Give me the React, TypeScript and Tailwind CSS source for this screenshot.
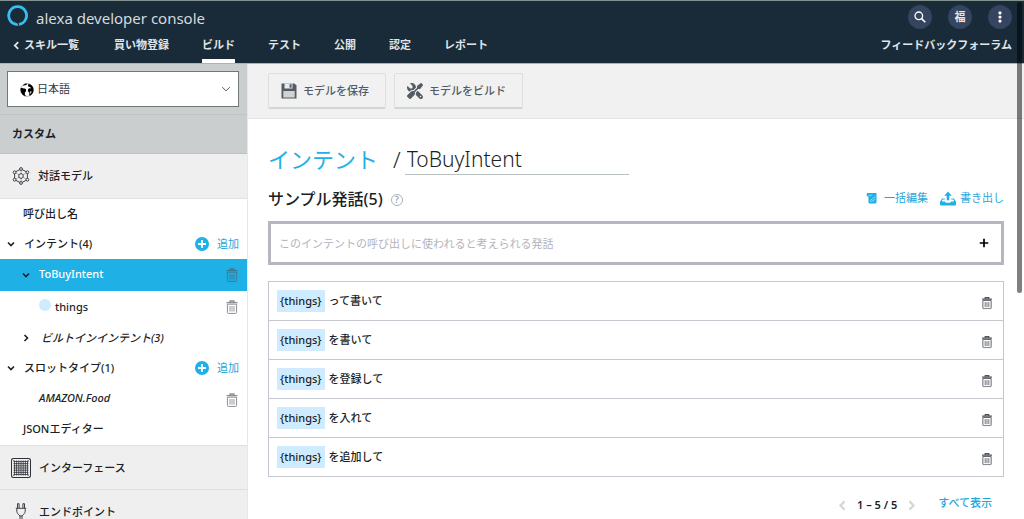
import type { ReactNode, SVGProps } from "react";
import { FaScrewdriverWrench } from "react-icons/fa6";

const navItems = ["買い物登録", "ビルド", "テスト", "公開", "認定", "レポート"];
const utterances = ["って書いて", "を書いて", "を登録して", "を入れて", "を追加して"];

function Trash(props: SVGProps<SVGSVGElement>) {
  return (
    <svg viewBox="0 0 12 14" width="12" height="14" fill="none" stroke="currentColor" aria-hidden="true" {...props}>
      <path d="M0.5 2.7h11M4 2.5V1h4v1.5" strokeWidth="1.3" />
      <path d="M1.4 4.2h9.2v8.3a.9.9 0 0 1-.9.9H2.3a.9.9 0 0 1-.9-.9z" strokeWidth="1" />
      <path d="M4 6v5.6M6 6v5.6M8 6v5.6" strokeWidth="0.9" />
    </svg>
  );
}

function Chevron({ dir, size = 8, width = 1.6 }: { dir: "down" | "right" | "left"; size?: number; width?: number }) {
  const d = { down: "M1 2.5l3 3 3-3", right: "M2.5 1l3 3-3 3", left: "M5.5 1l-3 3 3 3" }[dir];
  return (
    <svg viewBox="0 0 8 8" width={size} height={size} fill="none" stroke="currentColor" strokeWidth={width} className="shrink-0" aria-hidden="true">
      <path d={d} />
    </svg>
  );
}

function Globe() {
  return (
    <svg viewBox="0 0 14 14" width="14" height="14" aria-hidden="true" className="pointer-events-none absolute top-3 left-[13px]">
      <circle cx="7" cy="7" r="6.4" fill="#fff" stroke="#777" strokeWidth="0.5" />
      <path d="M.5 5.600L1.900 4.800l1.800.6 1.500.2 1 1.500-.4 1.400-1 1.200.1 1.700 1 1.800C3.200 13.200.3 10.400.5 5.600z" fill="#000" />
      <path d="M3.200 1.900C4.500.9 6 .5 7.500.6L6.300 1.900l-1.600.4-1 .6z" fill="#000" />
      <path d="M8.600.8c2.500.5 4.500 2.500 4.900 5.200.4 3.200-1.300 5.800-3.800 6.900l-.5-1.400.2-1.700-1.300-1.300-.3-1.800 1.200-1.400 1.700.1-.2-1.200-1.700-.4-.9-1z" fill="#000" />
      <path d="M10.300 8.200l1.300.3-.6 1.800-.9.500z" fill="#fff" />
    </svg>
  );
}

function NetworkIcon() {
  return (
    <svg viewBox="0 0 18 18" width="18" height="18" fill="none" stroke="#3c4148" strokeWidth="1" aria-hidden="true">
      <path d="M9 2l6.400 3.300v7.400L9 16l-6.400-3.300V5.300z" />
      <path d="M9 2v14M3 5.500l12 7M15 5.500l-12 7" strokeWidth="0.400" />
      <g fill="#efefef">
        <circle cx="9" cy="9" r="2.300" />
        <circle cx="9" cy="2" r="1.400" />
        <circle cx="9" cy="16" r="1.400" />
        <circle cx="2.600" cy="5.300" r="1.400" />
        <circle cx="15.400" cy="5.300" r="1.400" />
        <circle cx="2.600" cy="12.700" r="1.400" />
        <circle cx="15.400" cy="12.700" r="1.400" />
      </g>
    </svg>
  );
}

function GridIcon() {
  return (
    <svg viewBox="0 0 20 20" width="20" height="20" fill="none" stroke="#2f3338" aria-hidden="true">
      <rect x="0.500" y="0.500" width="19" height="19" rx="1" />
      <path d="M3.500 2.500v15M5.600 2.500v15M7.800 2.500v15M10 2.500v15M12.200 2.500v15M14.400 2.500v15M16.500 2.500v15M2.500 3.500h15M2.500 5.600h15M2.500 7.800h15M2.500 10h15M2.500 12.200h15M2.500 14.400h15M2.500 16.500h15" strokeWidth="0.800" />
      <path d="M1 1l2 2M19 1l-2 2M1 19l2-2M19 19l-2-2" strokeWidth="0.600" />
    </svg>
  );
}

function PlugIcon() {
  return (
    <svg viewBox="0 0 12 18" width="12" height="18" fill="none" stroke="#3c4148" strokeWidth="1" aria-hidden="true">
      <path d="M2.500 5V.7h1.600V5M7.900 5V.7h1.600V5M.8 5.300h10.400M1.800 5.500v2.700c0 2 1.600 3 3.200 4.800h2c1.600-1.800 3.200-2.800 3.200-4.800V5.500M5 12.800V18M7 12.800V18" />
    </svg>
  );
}

function SaveIcon() {
  return (
    <svg viewBox="0 0 16 16" width="16" height="16" aria-hidden="true">
      <path d="M.5.5h13l2 2v13H.5z" fill="#545b64" />
      <path d="M3.500.5h8v5h-8z" fill="#e9ebeb" />
      <path d="M8.600 1.200h2v3.500h-2z" fill="#545b64" />
      <path d="M2.300 8h11.400v6.500H2.300z" fill="#d0d3d4" />
    </svg>
  );
}

function BulkIcon() {
  return (
    <svg viewBox="0 0 12 12" width="12" height="12" aria-hidden="true">
      <path d="M1.800 1h8.700v9.300c0 .7-.5 1.200-1.200 1.200H3.700c-.7 0-1.200-.5-1.200-1.200V4.500h-.7C1 4.500.7 4 .7 3.300V2.200C.7 1.500 1.100 1 1.800 1z" fill="#1fb0e6" />
      <path d="M2.500 3.300h3.800M4.400 9.300l.6-1.500 4.300-3M5.300 9.700l4-2.500" stroke="#fff" strokeWidth="0.500" fill="none" />
    </svg>
  );
}

function ExportIcon() {
  return (
    <svg viewBox="0 0 16 15" width="16" height="15" fill="#1fb0e6" aria-hidden="true">
      <path d="M8 .5l3.700 4.200H9.300v4.600H6.700V4.700H4.300z" />
      <path d="M4.800 7.500v1H2.600l-.8 2h3.100l.9 1.300h4.400l.9-1.300h3.100l-.8-2h-2.200v-1h2.800l2 3.200v2.500c0 .7-.5 1.300-1.200 1.300H1.200c-.7 0-1.200-.6-1.200-1.300v-2.500l2-3.200z" />
    </svg>
  );
}

function AddLink() {
  return (
    <button type="button" className="ml-auto flex items-center gap-2 font-normal text-[#1fa7dd]">
      <svg viewBox="0 0 14 14" width="14" height="14" aria-hidden="true">
        <circle cx="7" cy="7" r="7" fill="#1fb0e6" />
        <path d="M7 3v8M3 7h8" stroke="#fff" strokeWidth="1.800" />
      </svg>
      追加
    </button>
  );
}

function DeleteButton({ label, className = "" }: { label: string; className?: string }) {
  return (
    <button type="button" aria-label={`${label} を削除`} className={`ml-auto ${className}`}>
      <Trash />
    </button>
  );
}

function RoundButton({ label, children }: { label: string; children: ReactNode }) {
  return (
    <button type="button" aria-label={label} className="flex size-6 items-center justify-center rounded-full bg-[#35445f] text-[11px] font-bold text-[#e6eaec]">
      {children}
    </button>
  );
}

function Header() {
  return (
    <header className="shrink-0 border-t border-b border-t-[#84928f] border-b-[#a9b5b9] bg-[#192b38] text-white">
      <div className="flex h-8 items-center justify-between pr-3 pl-[7px]">
        <div className="flex items-center gap-2">
          <svg viewBox="0 0 21 21" width="21" height="21" aria-hidden="true" className="mb-1">
            <path d="M8.700 19.200a8.900 8.900 0 1 1 3.300.1" fill="none" stroke="#37bdf0" strokeWidth="2.800" />
            <path d="M8.300 17.800l2 .4 1.300 2.500c-1.500.1-2.600 0-3.600-.3z" fill="#37bdf0" />
          </svg>
          <span className="pt-[2px] text-[15px] leading-5 text-[#d5dade]">alexa developer console</span>
        </div>
        <div className="flex items-center gap-4">
          <RoundButton label="検索">
            <svg viewBox="0 0 12 12" width="12" height="12" fill="none" stroke="#fff" aria-hidden="true">
              <circle cx="4.800" cy="4.800" r="3.800" strokeWidth="1.300" />
              <path d="M7.600 7.600l3.700 3.700" strokeWidth="1.600" />
            </svg>
          </RoundButton>
          <RoundButton label="アカウント">福</RoundButton>
          <RoundButton label="メニュー">
            <svg viewBox="0 0 4 12" width="4" height="12" fill="#fff" aria-hidden="true">
              <circle cx="2" cy="1.900" r="1.600" />
              <circle cx="2" cy="6" r="1.600" />
              <circle cx="2" cy="10.100" r="1.600" />
            </svg>
          </RoundButton>
        </div>
      </div>
      <nav className="flex h-[30px] items-stretch gap-[33px] px-3 font-bold text-[#e0e5e8]">
        <a href="#skills" className="flex items-center gap-[3px] pr-[2px] pb-[6px]">
          <Chevron dir="left" size={9} />
          スキル一覧
        </a>
        {navItems.map((item) => (
          <a key={item} href={`#${item}`} className={`flex items-center border-b-4 pb-[2px] ${item === "ビルド" ? "border-white" : "border-transparent"}`}>
            {item}
          </a>
        ))}
        <a href="#forum" className="ml-auto flex items-center pb-[6px]">フィードバックフォーラム</a>
      </nav>
    </header>
  );
}

function Sidebar() {
  return (
    <aside className="flex w-[248px] shrink-0 flex-col border-r border-[#e6e8e8] font-medium">
      <div className="border-b border-[#bfc4c4] bg-[#cacece] px-[7px] py-[7px]">
        <div className="relative mr-[1px] flex h-9 items-center">
          <select aria-label="言語" defaultValue="ja" className="h-full w-full appearance-none border border-[#6f7876] bg-white pl-[29px] font-normal text-[#33383e]">
            <option value="ja">日本語</option>
          </select>
          <Globe />
          <span className="pointer-events-none absolute right-2 flex text-[#555]">
            <Chevron dir="down" size={10} width={0.8} />
          </span>
        </div>
      </div>
      <h2 className="flex h-[39px] shrink-0 items-center border-b border-[#bcc1c1] bg-[#cacece] pl-3 font-bold">カスタム</h2>
      <a href="#model" className="flex h-11 shrink-0 items-center gap-2 bg-[#efefef] pl-3">
        <NetworkIcon />
        対話モデル
      </a>
      <ul className="border-y border-[#dfe1e1] bg-white">
        <li className="flex h-[30px] items-center pl-[23px]"><a href="#invocation">呼び出し名</a></li>
        <li className="flex h-[30px] items-center gap-[9px] pr-2 pl-[7px]">
          <Chevron dir="down" />
          <a href="#intents">インテント(4)</a>
          <AddLink />
        </li>
        <li className="flex h-8 items-center gap-[9px] bg-[#1fb0e5] pr-[9px] pl-[22px]">
          <Chevron dir="down" />
          <a href="#tobuy" className="pb-[2px] text-white">ToBuyIntent</a>
          <DeleteButton label="ToBuyIntent" className="text-[#3d7896]" />
        </li>
        <li className="flex h-8 items-center gap-1 pr-[9px] pl-[39px]">
          <span className="mb-1 size-3 rounded-full bg-[#cfebff]" />
          <a href="#things">things</a>
          <DeleteButton label="things" className="text-[#8b8f94]" />
        </li>
        <li className="flex h-[30px] items-center gap-[11px] pl-[22px] italic">
          <Chevron dir="right" />
          <a href="#builtin">ビルトインインテント(3)</a>
        </li>
        <li className="flex h-[30px] items-center gap-[9px] pr-2 pl-[7px]">
          <Chevron dir="down" />
          <a href="#slots">スロットタイプ(1)</a>
          <AddLink />
        </li>
        <li className="flex h-[30px] items-center pr-[9px] pl-[39px]">
          <a href="#food" className="italic">AMAZON.Food</a>
          <DeleteButton label="AMAZON.Food" className="mt-1 text-[#8b8f94]" />
        </li>
        <li className="flex h-8 items-center pl-[23px]"><a href="#json">JSONエディター</a></li>
      </ul>
      <a href="#interfaces" className="flex h-11 shrink-0 items-center gap-2 border-b border-[#dfe1e1] bg-[#efefef] pl-[11px]">
        <GridIcon />
        インターフェース
      </a>
      <a href="#endpoint" className="flex h-11 shrink-0 items-center gap-3 bg-[#efefef] pl-[15px]">
        <PlugIcon />
        エンドポイント
      </a>
    </aside>
  );
}

function ToolbarButton({ icon, children }: { icon: ReactNode; children: ReactNode }) {
  return (
    <button type="button" className="flex h-9 items-center gap-[6px] rounded-[2px] border border-b-2 border-[#dddfdf] border-b-[#d2d5d5] bg-[#f1f1f1] pr-4 pl-3 font-medium text-[#545b64]">
      {icon}
      {children}
    </button>
  );
}

function Main() {
  return (
    <main className="min-w-0 flex-1 bg-white">
      <div className="flex h-[55px] items-center gap-2 border-b border-[#e2e4e4] bg-[#f1f1f1] px-5">
        <ToolbarButton icon={<SaveIcon />}>モデルを保存</ToolbarButton>
        <ToolbarButton icon={<FaScrewdriverWrench size={16} className="-scale-x-100" aria-hidden="true" />}>モデルをビルド</ToolbarButton>
      </div>
      <div className="px-5">
        <div className="flex items-center pt-6 text-[22px] leading-8">
          <a href="#intents" className="text-[#1fb0e6]">インテント</a>
          <span className="ml-[15px] font-light">/</span>
          <input aria-label="インテント名" defaultValue="ToBuyIntent" className="ml-1 h-8 w-56 border-b border-[#b9c1c0] px-[2px] text-[21px] font-light" />
        </div>
        <div className="flex h-[46px] items-center">
          <h1 className="pt-[2px] text-base font-medium">サンプル発話(5)</h1>
          <button type="button" aria-label="ヘルプ" className="mt-1 ml-2 flex size-3 items-center justify-center rounded-full border border-[#a9b3b2] text-[9px] text-[#7c8786]">?</button>
          <div className="ml-auto flex items-center gap-3 text-[#1fa7dd]">
            <button type="button" className="flex items-center gap-[6px]"><BulkIcon />一括編集</button>
            <button type="button" className="flex items-center gap-1"><ExportIcon />書き出し</button>
          </div>
        </div>
        <div className="flex h-11 items-center border-3 border-[#b6b5c0] pr-3 pl-2">
          <input aria-label="サンプル発話" placeholder="このインテントの呼び出しに使われると考えられる発話" className="h-full min-w-0 flex-1 outline-none placeholder:text-[#b3b3bd]" />
          <button type="button" aria-label="発話を追加" className="flex">
            <svg viewBox="0 0 10 10" width="10" height="10" stroke="#000" strokeWidth="1.700" aria-hidden="true"><path d="M5 .7v8.600M.7 5h8.600" /></svg>
          </button>
        </div>
        <ul className="mt-4 border border-b-0 border-[#c6c7ce] font-medium">
          {utterances.map((text) => (
            <li key={text} className="flex h-[39px] items-center border-b border-[#c6c7ce] pr-[10px] pl-2">
              <span className="bg-[#cfebff] px-[3px] py-[3px] leading-4">{"{things}"}</span>
              <span className="ml-1">{text}</span>
              <DeleteButton label={text} className="mt-1 scale-90 text-[#50555b]" />
            </li>
          ))}
        </ul>
        <div className="flex items-center justify-end gap-[9px] pt-[18px] pr-3">
          <button type="button" aria-label="前へ" className="flex text-[#d5d6da]"><Chevron dir="left" size={11} /></button>
          <span className="font-semibold">1 – 5 / 5</span>
          <button type="button" aria-label="次へ" className="flex text-[#d5d6da]"><Chevron dir="right" size={11} /></button>
          <a href="#all" className="mb-1 ml-3 font-medium text-[#1fa7dd]">すべて表示</a>
        </div>
      </div>
    </main>
  );
}

export default function App() {
  return (
    <div className="relative flex h-screen flex-col overflow-hidden font-['Noto_Sans','Noto_Sans_CJK_JP',sans-serif] text-[11px] leading-4 text-[#1b1f26]">
      <Header />
      <div className="flex min-h-0 flex-1">
        <Sidebar />
        <Main />
      </div>
      <div className="absolute top-[2px] right-[2px] h-[291px] w-[5px] rounded-full bg-black/50" />
    </div>
  );
}
